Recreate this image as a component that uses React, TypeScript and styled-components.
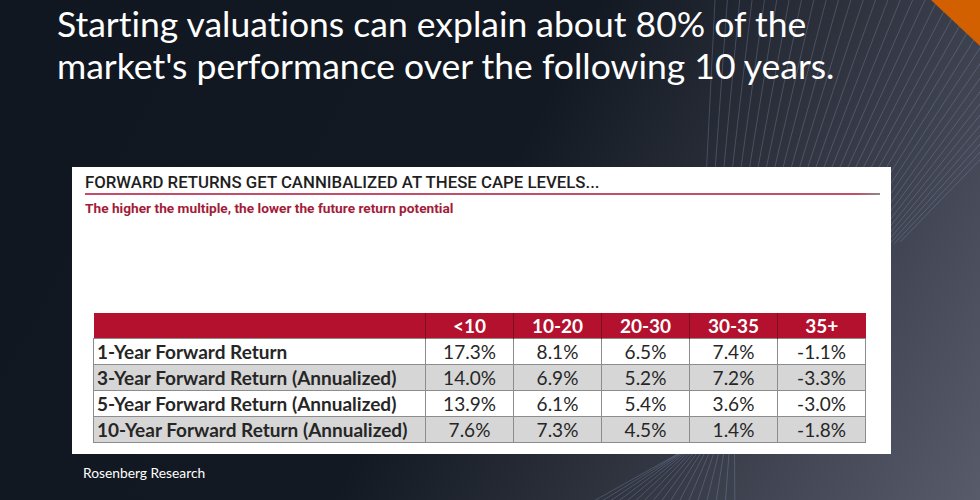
import styled, { createGlobalStyle } from "styled-components";

const GlobalStyle = createGlobalStyle`
  html, body {
    margin: 0;
    padding: 0;
    background: #121821;
  }
`;

const columns = ["<10", "10-20", "20-30", "30-35", "35+"];

const rows = [
  { label: "1-Year Forward Return", values: ["17.3%", "8.1%", "6.5%", "7.4%", "-1.1%"] },
  { label: "3-Year Forward Return (Annualized)", values: ["14.0%", "6.9%", "5.2%", "7.2%", "-3.3%"] },
  { label: "5-Year Forward Return (Annualized)", values: ["13.9%", "6.1%", "5.4%", "3.6%", "-3.0%"] },
  { label: "10-Year Forward Return (Annualized)", values: ["7.6%", "7.3%", "4.5%", "1.4%", "-1.8%"] },
];

// string-art lines in the background, like the slide theme
function Backdrop() {
  const upper = [];
  for (let i = 0; i <= 34; i++) {
    const t = i / 34;
    const x1 = 715 + t * 420;
    const x2 = 700 + t * 200;
    const y2 = 300 - t * 58;
    upper.push(<line key={"u" + i} x1={x1} y1={0} x2={x2} y2={y2} />);
  }
  const lower = [];
  for (let i = 0; i <= 16; i++) {
    const t = i / 16;
    lower.push(
      <line key={"l" + i} x1={560 + t * 175} y1={520} x2={738 - t * 4} y2={420 - t * 40} />
    );
  }
  return (
    <BackdropSvg width="980" height="500" viewBox="0 0 980 500">
      <g stroke="#8d9abf" strokeWidth="0.7" strokeOpacity="0.45" fill="none">
        {upper}
        {lower}
      </g>
      <polygon points="931,0 980,0 980,46" fill="#d25f00" />
    </BackdropSvg>
  );
}

export default function App() {
  return (
    <>
      <GlobalStyle />
      <Slide>
        <Backdrop />
        <Content>
          <Title>
            Starting valuations can explain about 80% of the
            <br />
            market's performance over the following 10 years.
          </Title>
          <Panel>
            <ChartHeading>FORWARD RETURNS GET CANNIBALIZED AT THESE CAPE LEVELS...</ChartHeading>
            <Rule />
            <ChartSubtitle>The higher the multiple, the lower the future return potential</ChartSubtitle>
            <Table>
              <colgroup>
                <col style={{ width: 332 }} />
                {columns.map((c) => (
                  <col key={c} style={{ width: 88 }} />
                ))}
              </colgroup>
              <thead>
                <tr>
                  <HeadCell $label />
                  {columns.map((c) => (
                    <HeadCell key={c}>{c}</HeadCell>
                  ))}
                </tr>
              </thead>
              <tbody>
                {rows.map((r, i) => (
                  <BodyRow key={r.label} $shaded={i % 2 === 1}>
                    <LabelCell>{r.label}</LabelCell>
                    {r.values.map((v, j) => (
                      <ValueCell key={j}>{v}</ValueCell>
                    ))}
                  </BodyRow>
                ))}
              </tbody>
            </Table>
          </Panel>
          <Source>Rosenberg Research</Source>
        </Content>
      </Slide>
    </>
  );
}

const Slide = styled.div`
  position: relative;
  width: 980px;
  height: 500px;
  overflow: hidden;
  background: linear-gradient(118deg, #111720 0%, #131922 48%, #2c313c 68%, #454957 85%, #585c6a 100%);
  font-variant-ligatures: none;
`;

const BackdropSvg = styled.svg`
  position: absolute;
  inset: 0;
  z-index: 0;
`;

const Content = styled.div`
  position: relative;
  z-index: 1;
  display: flex;
  flex-direction: column;
  padding: 3px 0 0 57px;
`;

const Title = styled.h1`
  margin: 0;
  color: #ffffff;
  font-family: Lato, "Open Sans", sans-serif;
  font-size: 35.5px;
  font-weight: 400;
  line-height: 42px;
`;

const Panel = styled.div`
  display: flex;
  flex-direction: column;
  box-sizing: border-box;
  width: 819px;
  height: 287px;
  margin: 80px 0 0 15px;
  padding: 5px 11px 0 13px;
  background: #ffffff;
`;

const ChartHeading = styled.div`
  color: #1f1f1f;
  font-family: Roboto, "Liberation Sans", sans-serif;
  font-size: 16.8px;
  font-weight: 500;
  line-height: 20px;
`;

const Rule = styled.div`
  height: 2px;
  margin-top: 1px;
  background: linear-gradient(90deg, #c24e69 97%, #8a8a8a 100%);
`;

const ChartSubtitle = styled.div`
  margin-top: 6px;
  color: #a31c3a;
  font-family: Roboto, "Liberation Sans", sans-serif;
  font-size: 13.7px;
  font-weight: 700;
  line-height: 15px;
`;

const Table = styled.table`
  margin: 97px 0 0 8px;
  width: 772px;
  border-collapse: collapse;
  table-layout: fixed;
  font-family: Lato, "Open Sans", sans-serif;
  font-size: 19px;
  color: #262626;
`;

const HeadCell = styled.th<{ $label?: boolean }>`
  height: 25px;
  padding: 0;
  background: #b3112e;
  border-left: ${(p) => (p.$label ? "none" : "1px solid #7a1020")};
  color: #ffffff;
  font-weight: 700;
  text-align: center;
  line-height: 22px;
`;

const BodyRow = styled.tr<{ $shaded: boolean }>`
  height: 26px;
  background: ${(p) => (p.$shaded ? "#d6d6d6" : "#ffffff")};
`;

const LabelCell = styled.td`
  padding: 0 0 0 3px;
  border: 1px solid #8c8c8c;
  font-weight: 700;
  white-space: nowrap;
  line-height: 22px;
`;

const ValueCell = styled.td`
  padding: 0;
  border: 1px solid #8c8c8c;
  text-align: center;
  line-height: 22px;
`;

const Source = styled.div`
  margin: 11px 0 0 26px;
  color: #ffffff;
  font-family: Lato, "Open Sans", sans-serif;
  font-size: 13.8px;
  line-height: 16px;
`;
